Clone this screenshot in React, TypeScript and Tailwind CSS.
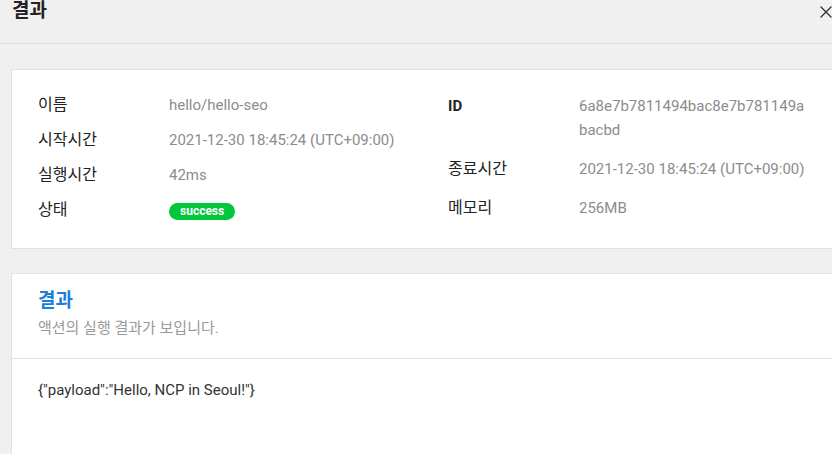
import { X } from 'lucide-react';

const font = "font-['Roboto','Noto_Sans_CJK_KR',sans-serif]";

const leftRows = [
  { label: '이름', value: 'hello/hello-seo' },
  { label: '시작시간', value: '2021-12-30 18:45:24 (UTC+09:00)' },
  { label: '실행시간', value: '42ms' },
];

const rightRows = [
  { label: 'ID', value: '6a8e7b7811494bac8e7b781149abacbd', bold: true },
  { label: '종료시간', value: '2021-12-30 18:45:24 (UTC+09:00)' },
  { label: '메모리', value: '256MB' },
];

export default function App() {
  return (
    <div className={`w-[832px] h-[454px] overflow-hidden bg-[#f0f0f0] ${font}`}>
      {/* modal header */}
      <div className="h-[44px] border-b border-[#dcdcdc] flex justify-between pl-3">
        <h2 className="text-[19px] leading-[22px] font-bold text-[#222]">결과</h2>
        <X className="w-5 h-5 mt-[2px] mr-[-4px] text-[#333]" strokeWidth={1.6} />
      </div>

      <div className="pl-[11px] w-[900px]">
        {/* summary card */}
        <div className="mt-[25px] bg-white border border-[#e2e2e2] pl-[26px] pt-[25px] pb-[28px] flex text-[15px]">
          <div className="w-[410px]">
            {leftRows.map(r => (
              <div key={r.label} className="flex leading-[20px] mb-[15px]">
                <div className="w-[131px] text-[16px] text-[#222]">{r.label}</div>
                <div className="text-[#8c8c8c]">{r.value}</div>
              </div>
            ))}
            <div className="flex leading-[20px]">
              <div className="w-[131px] text-[16px] text-[#222]">상태</div>
              <div>
                <span className="inline-block bg-[#00c73c] text-white text-[12px] font-bold leading-[17px] px-[11px] rounded-full mt-[1px]">
                  success
                </span>
              </div>
            </div>
          </div>
          <div className="w-[400px] -mt-[1px]">
            {rightRows.map((r, i) => (
              <div key={r.label} className={`flex leading-[24px] ${i < rightRows.length - 1 ? 'mb-[15px]' : ''}`}>
                <div className={`w-[131px] shrink-0 text-[#222] ${r.bold ? 'font-bold text-[15px]' : 'text-[16px]'}`}>{r.label}</div>
                <div className="w-[232px] break-all text-[#8c8c8c]">{r.value}</div>
              </div>
            ))}
          </div>
        </div>

        {/* result card */}
        <div className="mt-[24px] bg-white border border-[#e2e2e2] rounded-[2px] h-[200px]">
          <div className="pl-[26px] pt-[15px] pb-[20px] border-b border-[#e2e2e2]">
            <h3 className="text-[19px] leading-[24px] font-bold text-[#1a7fd8]">결과</h3>
            <p className="text-[15px] leading-[20px] text-[#999] mt-[5px]">액션의 실행 결과가 보입니다.</p>
          </div>
          <div className="pl-[26px] pt-[21px] text-[15px] leading-[20px] text-[#333]">
            {'{"payload":"Hello, NCP in Seoul!"}'}
          </div>
        </div>
      </div>
    </div>
  );
}
